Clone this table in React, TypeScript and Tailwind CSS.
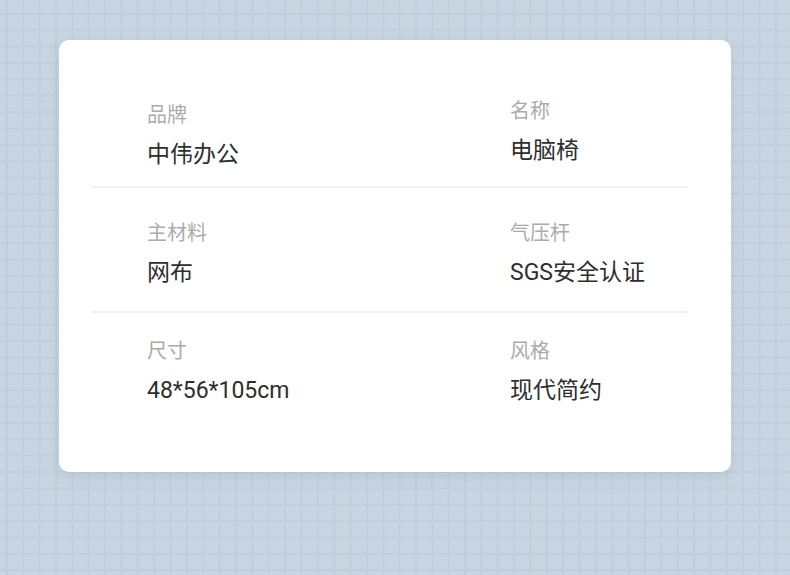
import React from "react";

const rows = [
  { left: { label: "品牌", value: "中伟办公" }, right: { label: "名称", value: "电脑椅" }, rightLift: true },
  { left: { label: "主材料", value: "网布" }, right: { label: "气压杆", value: "SGS安全认证" } },
  { left: { label: "尺寸", value: "48*56*105cm" }, right: { label: "风格", value: "现代简约" } },
];

function Field({ label, value, lift }: { label: string; value: string; lift?: boolean }) {
  return (
    <div className={lift ? "-mt-[4px]" : ""}>
      <div className="text-[20px] leading-[20px] text-[#ababab]">{label}</div>
      <div className="mt-[18px] text-[23px] leading-[23px] text-[#2e2e2e]">{value}</div>
    </div>
  );
}

export default function App() {
  return (
    <div
      className="h-[575px] w-full bg-[#c9d6e1] bg-[linear-gradient(to_right,#bdd0e0_2px,transparent_2px),linear-gradient(to_bottom,#bdd0e0_2px,transparent_2px)] bg-[size:16.37px_16.37px] bg-[position:6px_13px] pl-[59px] pt-[40px]"
      style={{ fontFamily: 'Roboto, "Noto Sans CJK SC", sans-serif' }}
    >
      <div className="h-[432px] w-[672px] rounded-[10px] bg-white pt-[65px] shadow-[0_4px_14px_rgba(60,80,100,0.12)]">
        {rows.map((row, i) => (
          <div key={i}>
            <div className="grid grid-cols-[363px_1fr] pl-[88px]">
              <Field label={row.left.label} value={row.left.value} />
              <Field label={row.right.label} value={row.right.value} lift={row.rightLift} />
            </div>
            {i < rows.length - 1 && (
              <div className={(i === 0 ? "mt-[20px] mb-[35px]" : "mt-[27px] mb-[28px]") + " ml-[32px] h-[2px] w-[596px] bg-[#f0f0f0]"} />
            )}
          </div>
        ))}
      </div>
    </div>
  );
}
